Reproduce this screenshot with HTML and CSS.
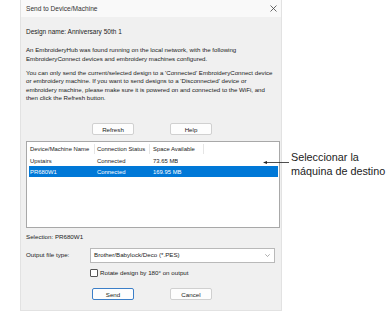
FILE: index.html
```html
<!DOCTYPE html>
<html lang="en">
	<head>
		<title>Send to Device/Machine</title>
		<link rel="stylesheet" href="styles.css">
	</head>
	<body>
		<div class="page">
			<div class="dialog">
				<div class="title-bar">
					<span>Send to Device/Machine</span>
					<svg class="close" width="7" height="7" viewBox="0 0 7 7">
						<path d="M0.5 0.5 L6.5 6.5 M6.5 0.5 L0.5 6.5" stroke="#444" stroke-width="0.8" fill="none"/>
					</svg>
				</div>
				<div class="content">
					<p class="design-name">Design name: Anniversary 50th 1</p>
					<p class="info">An EmbroideryHub was found running on the local network, with the following<br>EmbroideryConnect devices and embroidery machines configured.</p>
					<p class="info second">You can only send the current/selected design to a 'Connected' EmbroideryConnect device<br>or embroidery machine. If you want to send designs to a 'Disconnected' device or<br>embroidery machine, please make sure it is powered on and connected to the WiFi, and<br>then click the Refresh button.</p>

					<div class="button-row top-buttons">
						<button>Refresh</button>
						<button>Help</button>
					</div>

					<div class="listbox">
						<div class="row header">
							<div class="col name">Device/Machine Name</div>
							<div class="col status">Connection Status</div>
							<div class="col space">Space Available</div>
						</div>
						<div class="row">
							<div class="col name">Upstairs</div>
							<div class="col status">Connected</div>
							<div class="col space">73.65 MB</div>
						</div>
						<div class="row selected">
							<div class="col name">PR680W1</div>
							<div class="col status">Connected</div>
							<div class="col space">169.95 MB</div>
						</div>
					</div>

					<p class="selection">Selection: PR680W1</p>

					<div class="output-row">
						<span class="output-label">Output file type:</span>
						<div class="combo">
							<span>Brother/Babylock/Deco (*.PES)</span>
							<svg width="5" height="3" viewBox="0 0 5 3">
								<path d="M0.3 0.3 L2.5 2.5 L4.7 0.3" stroke="#777" stroke-width="0.6" fill="none"/>
							</svg>
						</div>
					</div>

					<label class="check-row">
						<span class="checkbox"></span>
						<span>Rotate design by 180° on output</span>
					</label>

					<div class="button-row bottom-buttons">
						<button class="default">Send</button>
						<button>Cancel</button>
					</div>
				</div>
			</div>

			<div class="callout">
				<svg class="arrow" width="26" height="5" viewBox="0 0 26 5">
					<path d="M2 2.5 L26 2.5" stroke="#222" stroke-width="0.8"/>
					<path d="M0 2.5 L4 1 L4 4 Z" fill="#222"/>
				</svg>
				<div class="callout-text">Seleccionar la<br>máquina de destino</div>
			</div>
		</div>
	</body>
</html>
```

FILE: styles.css
```css
body {
	margin: 0;
	background: #ffffff;
	font-family: "Liberation Sans", Arial, sans-serif;
}
	.page {
		position: relative;
		padding-left: 20px;
		width: 371px;
		height: 326px;
	}
	.dialog {
		width: 260px;
		height: 310px;
		background: #f0f0f0;
		border: 1px solid #e2e2e2;
		border-top: none;
		display: flex;
		flex-direction: column;
		font-size: 6.2px;
		color: #222;
	}
	.title-bar {
		height: 17px;
		background: #f9f9f9;
		display: flex;
		align-items: center;
		justify-content: space-between;
		padding: 0 4px 0 5px;
		font-size: 6.6px;
		color: #333;
	}
	.content {
		padding: 0 4px 0 5px;
		line-height: 8.3px;
	}
	p {
		margin: 0;
		white-space: nowrap;
	}
	.design-name {
		margin-top: 11px;
		font-size: 6.5px;
	}
	.info {
		margin-top: 10px;
		font-size: 6.15px;
	}
	.info.second {
		margin-top: 6.2px;
	}
	.button-row {
		display: flex;
		justify-content: center;
		gap: 36px;
		padding-left: 1px;
	}
	.top-buttons {
		margin-top: 21px;
	}
	button {
		width: 42px;
		height: 12px;
		padding: 0;
		font-family: inherit;
		font-size: 6.2px;
		color: #222;
		background: #fdfdfd;
		border: 1px solid #d0d0d0;
		border-radius: 2px;
	}
	button.default {
		border-color: #3c7fc8;
	}
	.listbox {
		margin-top: 6px;
		height: 83px;
		width: 249px;
		background: #ffffff;
		border: 1px solid #a8a8a8;
		padding: 1.5px 1px 0 2px;
		font-size: 5.9px;
	}
	.row {
		display: flex;
		height: 11px;
		align-items: center;
	}
	.row.header {
		height: 10px;
		margin-bottom: 1.5px;
	}
	.col {
		padding-left: 1px;
		white-space: nowrap;
		overflow: hidden;
	}
	.name {
		width: 64px;
	}
	.status {
		width: 52px;
		padding-left: 3px;
	}
	.space {
		padding-left: 4px;
	}
	.header .col {
		height: 10px;
		line-height: 10px;
	}
	.header .status,
	.header .space {
		border-left: 1px solid #e5e5e5;
		padding-left: 2px;
	}
	.header .space {
		border-right: 1px solid #e5e5e5;
		padding-left: 3px;
		width: 50px;
	}
	.row.selected {
		background: #0078d7;
		color: #ffffff;
	}
	.selection {
		margin-top: 5px;
	}
	.output-row {
		margin-top: 7px;
		display: flex;
		align-items: center;
	}
	.output-label {
		width: 64px;
	}
	.combo {
		width: 176px;
		height: 13px;
		background: #ffffff;
		border: 1px solid #b9b9b9;
		display: flex;
		align-items: center;
		justify-content: space-between;
		padding: 0 4px 0 3px;
	}
	.check-row {
		margin-top: 6px;
		margin-left: 64px;
		display: flex;
		align-items: center;
		gap: 2px;
		height: 8px;
	}
	.checkbox {
		width: 6px;
		height: 6px;
		background: #ffffff;
		border: 1px solid #555;
		border-radius: 1px;
	}
	.bottom-buttons {
		margin-top: 11px;
	}
	.callout {
		position: absolute;
		left: 263px;
		top: 150px;
		display: flex;
		align-items: flex-start;
		gap: 2px;
	}
	.arrow {
		margin-top: 10px;
	}
	.callout-text {
		font-size: 10.8px;
		line-height: 14px;
		color: #222;
	}
```
